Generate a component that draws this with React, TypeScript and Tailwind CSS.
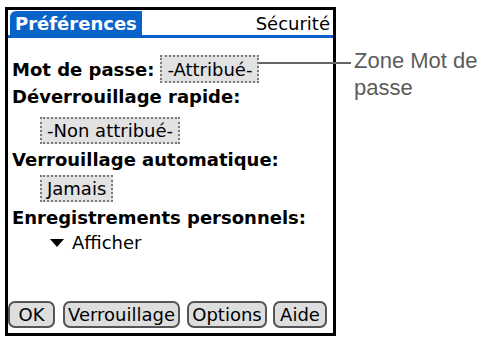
import { FC } from "react";

const palm = { fontFamily: '"DejaVu Sans", "Liberation Sans", sans-serif' };

const Field: FC<{ label: string; className?: string }> = ({ label, className }) => (
  <span
    className={
      "inline-flex h-[27px] items-center border-2 border-dotted border-[#7a7a7a] bg-[#e2e2e2] px-[5px] text-[18px] text-black " +
      (className ?? "")
    }
  >
    {label}
  </span>
);

const Btn: FC<{ label: string; className?: string }> = ({ label, className }) => (
  <button
    className={
      "flex h-[27px] items-center justify-center rounded-[7px] border-2 border-[#555] bg-[#dedede] text-[18px] leading-none text-black " +
      (className ?? "")
    }
  >
    {label}
  </button>
);

const App = () => {
  return (
    <div className="relative h-[340px] w-[487px] overflow-hidden bg-white" style={palm}>
      {/* Palm screen */}
      <div className="ml-[5px] mt-[7px] flex h-[329px] w-[331px] flex-col border-[3px] border-black">
        {/* Title bar */}
        <div className="flex items-end justify-between border-b-[3px] border-[#0a63c9] pl-[2px] pr-[3px] pt-[1px]">
          <div className="rounded-tl-[6px] bg-[#0a63c9] px-[5px] pt-[1px] text-[18px] font-bold leading-[23px] text-white">
            Préférences
          </div>
          <div className="pb-[1px] text-[18px] leading-[21px] text-black">Sécurité</div>
        </div>

        {/* Body */}
        <div className="flex flex-1 flex-col pt-[17px] text-black">
          <div className="flex items-center gap-[6px] pl-[4px]">
            <span className="text-[18px] font-bold">Mot de passe:</span>
            <Field label="-Attribué-" className="h-[28px]" />
          </div>
          <div className="mt-[2px] pl-[4px] text-[18px] font-bold leading-[24px]">Déverrouillage rapide:</div>
          <div className="ml-[32px] mt-[8px]">
            <Field label="-Non attribué-" />
          </div>
          <div className="mt-[4px] pl-[4px] text-[18px] font-bold leading-[24px]">Verrouillage automatique:</div>
          <div className="ml-[32px] mt-[3px]">
            <Field label="Jamais" />
          </div>
          <div className="mt-[4px] pl-[4px] text-[18px] font-bold leading-[24px]">Enregistrements personnels:</div>
          <div className="ml-[42px] mt-[2px] flex items-center gap-[8px] text-[18px] leading-[22px]">
            <svg width="14" height="9" viewBox="0 0 14 9">
              <path d="M0 0 H14 L7 8 Z" fill="#000" />
            </svg>
            Afficher
          </div>

          {/* Buttons */}
          <div className="mt-auto mb-[5px] flex items-center">
            <Btn label="OK" className="w-[47px]" />
            <Btn label="Verrouillage" className="ml-[8px] w-[117px]" />
            <Btn label="Options" className="ml-[7px] w-[80px]" />
            <Btn label="Aide" className="ml-[6px] w-[54px]" />
          </div>
        </div>
      </div>

      {/* Callout */}
      <div className="absolute left-[259px] top-[62px] h-[2px] w-[92px] bg-[#666]" />
      <div
        className="absolute left-[354px] top-[47px] text-[22px] leading-[27px] text-[#5c5c5c]"
        style={{ fontFamily: '"Liberation Sans", Arial, sans-serif' }}
      >
        Zone Mot de
        <br />
        passe
      </div>
    </div>
  );
};

export default App;
